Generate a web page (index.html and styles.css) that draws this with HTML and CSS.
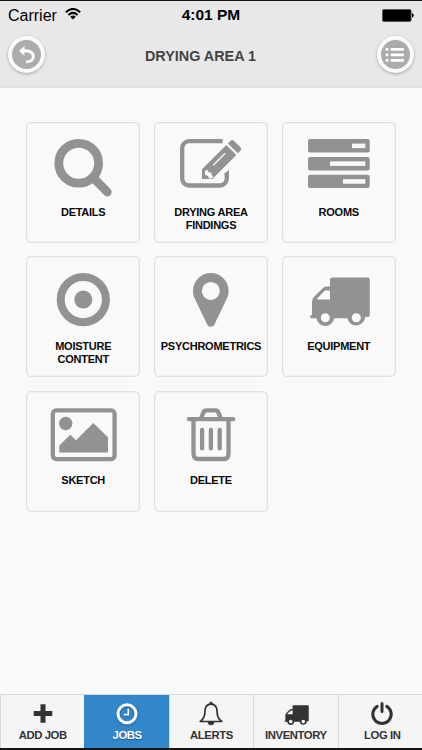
FILE: index.html
```html
<!DOCTYPE html>
<html lang="en">
<head>
<meta charset="utf-8">
<title>Drying Area 1</title>
<link rel="stylesheet" href="styles.css">
</head>
<body>
<div class="app">
  <header class="header">
    <div class="status">
      <div class="carrier"><span>Carrier</span>
        <svg class="wifi" width="16" height="12" viewBox="0 0 16 12"><g fill="none" stroke="#000" stroke-width="2"><path d="M.8 4.2Q8-2.4 15.2 4.2"/><path d="M3.4 7Q8 2.8 12.6 7"/></g><path d="M5.2 8.8Q8 6.2 10.8 8.8L8 11.6Z"/></svg>
      </div>
      <div class="time">4:01 PM</div>
      <div class="battery"><svg width="32" height="13" viewBox="0 0 32 13"><rect x=".5" y=".5" width="28.6" height="12" rx="1.5" stroke="#555"/><path d="M30 4.3q1.8.6 1.8 2.2T30 8.7Z"/></svg></div>
    </div>
    <div class="titlebar">
      <button class="round" aria-label="Back"><svg width="30" height="30" viewBox="0 0 30 30"><path d="M7 10.9L12.5 6v9.7Z" fill="#fff"/><path d="M11 10.8c6-.3 10.3 1.2 10.3 5.6 0 3.2-2.8 5.4-7.2 5.4" fill="none" stroke="#fff" stroke-width="3"/></svg></button>
      <h1 class="title">DRYING AREA 1</h1>
      <button class="round" aria-label="Menu"><svg width="30" height="30" viewBox="0 0 30 30"><path d="M5.7 9.4h2.6M5.7 14.9h2.6M5.7 20.4h2.6M10.7 9.4h13.2M10.7 14.9h13.2M10.7 20.4h13.2" stroke="#fff" stroke-width="2.7"/></svg></button>
    </div>
  </header>

  <main class="grid">
    <a class="card">
      <svg class="icon" viewBox="0 0 114 82"><g fill="none" stroke="#929292" stroke-width="8.8" stroke-linecap="round"><circle cx="52.7" cy="41.3" r="19.9"/><path d="M67.5 56L81.3 70"/></g></svg>
      <span class="label">DETAILS</span>
    </a>
    <a class="card">
      <svg class="icon" viewBox="0 0 114 82"><path d="M68.7 19.2H35.2a7 7 0 0 0-7 7v30.3a7 7 0 0 0 7 7h30.6a7 7 0 0 0 7-7V51" fill="none" stroke="#929292" stroke-width="4.3"/><path d="M70.6 53V51.2l4.4-3.1V53Z" fill="#929292"/><path d="M48 57V47.3L72.3 23l10 10-24 24Z" fill="#929292"/><path d="M73.9 21.4l2.5-2.5q1.8-1.8 3.6 0l6.5 6.3q1.6 1.6 0 3.4l-2.7 2.7Z" fill="#929292"/><path d="M50.8 49.6l2.4-2.2 1.5 2.9 2.6.4.5 2.5 1.5 1.4-1.8 1.8-2.6-.2-.8-2.2-2.9-.9Z" fill="#f9f9f9"/><path d="M59.2 43.3L71.2 31.3" stroke="#f9f9f9" stroke-width="1.3" fill="none"/></svg>
      <span class="label">DRYING AREA FINDINGS</span>
    </a>
    <a class="card">
      <svg class="icon" viewBox="0 0 114 82"><g fill="#929292"><rect x="26" y="17" width="61.7" height="13.5" rx="2"/><rect x="26" y="35" width="61.7" height="13.4" rx="2"/><rect x="26" y="52.8" width="61.7" height="13.3" rx="2"/></g><g fill="#f9f9f9"><rect x="70" y="21.6" width="13.3" height="4.5"/><rect x="48" y="39.4" width="35.3" height="4.5"/><rect x="61" y="57.2" width="22.3" height="4.5"/></g></svg>
      <span class="label">ROOMS</span>
    </a>
    <a class="card">
      <svg class="icon" viewBox="0 0 114 82"><circle cx="57.3" cy="43.6" r="22.6" fill="none" stroke="#929292" stroke-width="8"/><circle cx="57.3" cy="43.6" r="9" fill="#929292"/></svg>
      <span class="label">MOISTURE CONTENT</span>
    </a>
    <a class="card">
      <svg class="icon" viewBox="0 0 114 82"><path fill="#929292" fill-rule="evenodd" d="M56.8 17A17.8 17.8 0 0 0 39 34.8c0 3.2.6 5.3 1.6 7.5L53.2 68.4c1.5 3 5.7 3 7.2 0L73 42.3c1-2.2 1.6-4.3 1.6-7.5A17.8 17.8 0 0 0 56.8 17Zm0 8.9a9 9 0 1 1 0 18 9 9 0 0 1 0-18Z"/></svg>
      <span class="label">PSYCHROMETRICS</span>
    </a>
    <a class="card">
      <svg class="icon" viewBox="0 0 114 82"><path fill="#929292" fill-rule="evenodd" d="M50 21.6H85.8q2 0 2 2V59q0 2-2 2H83.2a9 9 0 0 1-17.8 1.3H52.2a9 9 0 0 1-17.8 0H30q-2 0-2-1.6T30 59V46q0-3 1.7-4.8l8.2-8.3q2.2-2.3 5-2.3H48v-7q0-2 2-2ZM35 43.6H48v-9H44q-1.2 0-2 .8l-6.3 6.3Q35 42.4 35 43.6ZM43.3 57.2a4.5 4.5 0 1 0 0 9 4.5 4.5 0 0 0 0-9ZM74.3 57.2a4.5 4.5 0 1 0 0 9 4.5 4.5 0 0 0 0-9Z"/></svg>
      <span class="label">EQUIPMENT</span>
    </a>
    <a class="card">
      <svg class="icon" viewBox="0 0 114 82"><rect x="26.8" y="19.4" width="61.8" height="48.7" rx="3.5" fill="none" stroke="#929292" stroke-width="4.3"/><circle cx="39.7" cy="32.5" r="6.7" fill="#929292"/><path fill="#929292" d="M33.3 61.5v-7L44.3 43.7l5.7 5.6L67.3 31.9 82 46.2V61.5Z"/></svg>
      <span class="label">SKETCH</span>
    </a>
    <a class="card">
      <svg class="icon" viewBox="0 0 114 82"><g fill="none" stroke="#929292" stroke-width="4.3" stroke-linecap="round"><path d="M35 28.2H79.2M46.9 27.5l2.6-6.2q.8-1.9 2.8-1.9h9.2q2 0 2.8 1.9l2.6 6.2M39.5 28.5V62q0 6 4.5 6H70q4.5 0 4.5-6V28.5M48.1 39V57.4M56.9 39V57.4M65.7 39V57.4"/></g></svg>
      <span class="label">DELETE</span>
    </a>
  </main>

  <nav class="tabs">
    <a class="tab">
      <svg class="tab-icon" viewBox="0 0 30 24"><path d="M15 4.2V22.8M5.7 13.5H24.3" stroke="#333" stroke-width="5"/></svg>
      <span>ADD JOB</span>
    </a>
    <a class="tab active">
      <svg class="tab-icon" viewBox="0 0 30 24"><circle cx="15" cy="13.8" r="9" fill="none" stroke="#fff" stroke-width="3"/><path d="M16.3 8.7v6H11.8" fill="none" stroke="#fff" stroke-width="1.7"/></svg>
      <span>JOBS</span>
    </a>
    <a class="tab">
      <svg class="tab-icon" viewBox="0 0 30 24"><path d="M15 3.8c-4.2.6-6 3.4-6 7.2 0 5.3-1.3 8-4.7 10.5H25.7C22.3 19 21 16.3 21 11c0-3.8-1.8-6.6-6-7.2Z" fill="none" stroke="#333" stroke-width="1.7" stroke-linejoin="round"/><path d="M12 22a3 3 0 0 0 6 0ZM13.8 2.2h2.4v2.5h-2.4Z" fill="#333" stroke="#333" stroke-width=".6"/></svg>
      <span>ALERTS</span>
    </a>
    <a class="tab">
      <svg class="tab-icon" viewBox="0 0 30 24"><path transform="translate(-7.8 -3.4) scale(.405)" fill="#333" fill-rule="evenodd" d="M50 21.6H85.8q2 0 2 2V59q0 2-2 2H83.2a9 9 0 0 1-17.8 1.3H52.2a9 9 0 0 1-17.8 0H30q-2 0-2-1.6T30 59V46q0-3 1.7-4.8l8.2-8.3q2.2-2.3 5-2.3H48v-7q0-2 2-2ZM35 43.6H48v-9H44q-1.2 0-2 .8l-6.3 6.3Q35 42.4 35 43.6ZM43.3 57.2a4.5 4.5 0 1 0 0 9 4.5 4.5 0 0 0 0-9ZM74.3 57.2a4.5 4.5 0 1 0 0 9 4.5 4.5 0 0 0 0-9Z"/></svg>
      <span>INVENTORY</span>
    </a>
    <a class="tab last">
      <svg class="tab-icon" viewBox="0 0 30 24"><g fill="none" stroke="#333" stroke-width="3" stroke-linecap="round"><path d="M15 3.6V11.5M10.2 6.4a9.2 9.2 0 1 0 9.6 0"/></g></svg>
      <span>LOG IN</span>
    </a>
  </nav>
</div>
</body>
</html>
```
FILE: styles.css
```css
* { box-sizing: border-box; }
body {
  margin: 0;
  font-family: "Liberation Sans", Arial, sans-serif;
}
.app {
  width: 422px;
  height: 750px;
  display: flex;
  flex-direction: column;
  background: #f9f9f9;
  border-top: 1px solid #141014;
  border-bottom: 2px solid #161616;
}
.header {
  height: 87px;
  background: #e8e8e8;
  border-bottom: 2px solid #e0e0e0;
}
.status {
  height: 28px;
  padding: 0 8px 0 8px;
  display: grid;
  grid-template-columns: 1fr auto 1fr;
  align-items: center;
  color: #000;
}
.carrier {
  display: flex;
  align-items: center;
  gap: 8px;
  font-size: 16px;
}
.carrier span { padding-top: 1px; }
.wifi { margin-bottom: 2px; }
.time {
  font-size: 15.5px;
  font-weight: bold;
}
.battery {
  display: flex;
  justify-content: flex-end;
}
.titlebar {
  display: flex;
  justify-content: space-between;
  align-items: center;
  height: 37px;
  margin-top: 7px;
  padding: 0 8px;
}
.title {
  margin: 0;
  padding: 2px 21px 0 0;
  font-size: 14.4px;
  color: #444;
}
.round {
  width: 37px;
  height: 37px;
  padding: 0;
  display: flex;
  align-items: center;
  justify-content: center;
  border: 4px solid #fafafa;
  border-radius: 50%;
  background: #acacac;
  box-shadow: 0 1px 3px rgba(0, 0, 0, .3);
}
.round svg { flex: none; }
.grid {
  flex: 1;
  display: grid;
  grid-template-columns: repeat(3, 114.4px);
  grid-auto-rows: 121px;
  align-content: start;
  gap: 13.4px;
  padding: 34px 26px 0;
}
.card {
  display: flex;
  flex-direction: column;
  align-items: center;
  border-radius: 5px;
  box-shadow: inset 0 0 0 1.3px #e0e0e0;
}
.icon {
  width: 114px;
  height: 82px;
}
.label {
  width: 106px;
  margin-top: 1.6px;
  font-size: 11px;
  font-weight: bold;
  letter-spacing: -.25px;
  line-height: 13.4px;
  text-align: center;
  color: #0a0a0a;
}
.tabs {
  height: 54px;
  display: grid;
  grid-template-columns: repeat(5, 1fr);
  border-top: 1px solid #d8d8d8;
  background: #f5f5f5;
}
.tab {
  display: flex;
  flex-direction: column;
  align-items: center;
  padding-top: 5px;
  border-left: 1px solid #d8d8d8;
  font-size: 11.3px;
  font-weight: bold;
  letter-spacing: -.4px;
  line-height: 13px;
  color: #333;
}
.tab span { margin-top: 5px; }
.tab-icon {
  width: 30px;
  height: 24px;
  overflow: visible;
}
.last { padding-left: 4px; }
.active {
  background: #3287cb;
  border-color: #3287cb;
  color: #fff;
  text-shadow: 0 1px 1px rgba(0, 0, 0, .35);
}
.active .tab-icon { filter: drop-shadow(0 1px 1px rgba(0, 0, 0, .3)); }
```
